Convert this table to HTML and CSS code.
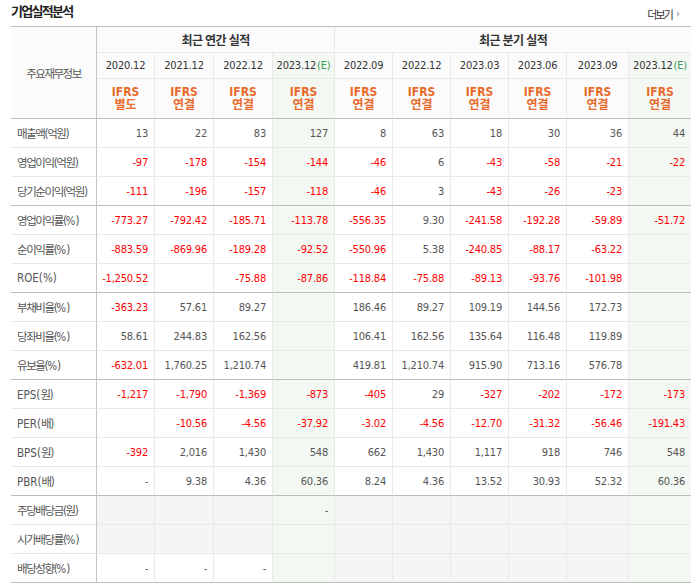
FILE: index.html
```html
<!DOCTYPE html>
<html lang="ko">
<head>
<meta charset="utf-8">
<title>기업실적분석</title>
<link rel="stylesheet" href="styles.css">
</head>
<body>
<div class="wrap">
  <div class="head">
    <h3 class="title">기업실적분석</h3>
    <a class="more" href="#">더보기<span class="arr"></span></a>
  </div>
  <table class="fin">
    <colgroup>
      <col class="c-label"><col class="c58"><col class="c59"><col class="c59"><col class="c62">
      <col class="c58"><col class="c58"><col class="c58"><col class="c58"><col class="c62"><col class="c62">
    </colgroup>
    <thead>
      <tr class="h1">
        <th class="label-h" rowspan="3">주요재무정보</th>
        <th class="grp" colspan="4">최근 연간 실적</th>
        <th class="grp last" colspan="6">최근 분기 실적</th>
      </tr>
      <tr class="h2">
        <th>2020.12</th><th>2021.12</th><th>2022.12</th><th class="e">2023.12<em>(E)</em></th>
        <th>2022.09</th><th>2022.12</th><th>2023.03</th><th>2023.06</th><th>2023.09</th><th class="e last">2023.12<em>(E)</em></th>
      </tr>
      <tr class="h3 end">
        <th>IFRS<br>별도</th><th>IFRS<br>연결</th><th>IFRS<br>연결</th><th class="e">IFRS<br>연결</th>
        <th>IFRS<br>연결</th><th>IFRS<br>연결</th><th>IFRS<br>연결</th><th>IFRS<br>연결</th><th>IFRS<br>연결</th><th class="e last">IFRS<br>연결</th>
      </tr>
    </thead>
    <tbody>
      <tr>
        <th class="lab">매출액(억원)</th>
        <td>13</td><td>22</td><td>83</td><td class="e">127</td>
        <td>8</td><td>63</td><td>18</td><td>30</td><td>36</td><td class="e last">44</td>
      </tr>
      <tr>
        <th class="lab">영업이익(억원)</th>
        <td class="n">-97</td><td class="n">-178</td><td class="n">-154</td><td class="e n">-144</td>
        <td class="n">-46</td><td>6</td><td class="n">-43</td><td class="n">-58</td><td class="n">-21</td><td class="e last n">-22</td>
      </tr>
      <tr class="end">
        <th class="lab">당기순이익(억원)</th>
        <td class="n">-111</td><td class="n">-196</td><td class="n">-157</td><td class="e n">-118</td>
        <td class="n">-46</td><td>3</td><td class="n">-43</td><td class="n">-26</td><td class="n">-23</td><td class="e last"></td>
      </tr>
      <tr>
        <th class="lab">영업이익률(<span class="lat">%</span>)</th>
        <td class="n">-773.27</td><td class="n">-792.42</td><td class="n">-185.71</td><td class="e n">-113.78</td>
        <td class="n">-556.35</td><td>9.30</td><td class="n">-241.58</td><td class="n">-192.28</td><td class="n">-59.89</td><td class="e last n">-51.72</td>
      </tr>
      <tr>
        <th class="lab">순이익률(<span class="lat">%</span>)</th>
        <td class="n">-883.59</td><td class="n">-869.96</td><td class="n">-189.28</td><td class="e n">-92.52</td>
        <td class="n">-550.96</td><td>5.38</td><td class="n">-240.85</td><td class="n">-88.17</td><td class="n">-63.22</td><td class="e last"></td>
      </tr>
      <tr class="end">
        <th class="lab"><span class="lat">ROE(%</span>)</th>
        <td class="n">-1,250.52</td><td></td><td class="n">-75.88</td><td class="e n">-87.86</td>
        <td class="n">-118.84</td><td class="n">-75.88</td><td class="n">-89.13</td><td class="n">-93.76</td><td class="n">-101.98</td><td class="e last"></td>
      </tr>
      <tr>
        <th class="lab">부채비율(<span class="lat">%</span>)</th>
        <td class="n">-363.23</td><td>57.61</td><td>89.27</td><td class="e"></td>
        <td>186.46</td><td>89.27</td><td>109.19</td><td>144.56</td><td>172.73</td><td class="e last"></td>
      </tr>
      <tr>
        <th class="lab">당좌비율(<span class="lat">%</span>)</th>
        <td>58.61</td><td>244.83</td><td>162.56</td><td class="e"></td>
        <td>106.41</td><td>162.56</td><td>135.64</td><td>116.48</td><td>119.89</td><td class="e last"></td>
      </tr>
      <tr class="end">
        <th class="lab">유보율(<span class="lat">%</span>)</th>
        <td class="n">-632.01</td><td>1,760.25</td><td>1,210.74</td><td class="e"></td>
        <td>419.81</td><td>1,210.74</td><td>915.90</td><td>713.16</td><td>576.78</td><td class="e last"></td>
      </tr>
      <tr>
        <th class="lab"><span class="lat">EPS(</span>원)</th>
        <td class="n">-1,217</td><td class="n">-1,790</td><td class="n">-1,369</td><td class="e n">-873</td>
        <td class="n">-405</td><td>29</td><td class="n">-327</td><td class="n">-202</td><td class="n">-172</td><td class="e last n">-173</td>
      </tr>
      <tr>
        <th class="lab"><span class="lat">PER(</span>배)</th>
        <td></td><td class="n">-10.56</td><td class="n">-4.56</td><td class="e n">-37.92</td>
        <td class="n">-3.02</td><td class="n">-4.56</td><td class="n">-12.70</td><td class="n">-31.32</td><td class="n">-56.46</td><td class="e last n">-191.43</td>
      </tr>
      <tr>
        <th class="lab"><span class="lat">BPS(</span>원)</th>
        <td class="n">-392</td><td>2,016</td><td>1,430</td><td class="e">548</td>
        <td>662</td><td>1,430</td><td>1,117</td><td>918</td><td>746</td><td class="e last">548</td>
      </tr>
      <tr class="end">
        <th class="lab"><span class="lat">PBR(</span>배)</th>
        <td>-</td><td>9.38</td><td>4.36</td><td class="e">60.36</td>
        <td>8.24</td><td>4.36</td><td>13.52</td><td>30.93</td><td>52.32</td><td class="e last">60.36</td>
      </tr>
      <tr>
        <th class="lab">주당배당금(원)</th>
        <td class="g"></td><td class="g"></td><td class="g"></td><td class="e">-</td>
        <td class="g"></td><td class="g"></td><td class="g"></td><td class="g"></td><td class="g"></td><td class="e last"></td>
      </tr>
      <tr>
        <th class="lab">시가배당률(<span class="lat">%</span>)</th>
        <td class="g"></td><td class="g"></td><td class="g"></td><td class="e"></td>
        <td class="g"></td><td class="g"></td><td class="g"></td><td class="g"></td><td class="g"></td><td class="e last"></td>
      </tr>
      <tr class="end">
        <th class="lab">배당성향(<span class="lat">%</span>)</th>
        <td>-</td><td>-</td><td>-</td><td class="e"></td>
        <td class="g"></td><td class="g"></td><td class="g"></td><td class="g"></td><td class="g"></td><td class="e last"></td>
      </tr>
    </tbody>
  </table>
</div>
</body>
</html>
```

FILE: styles.css
```css
* { box-sizing: border-box; }

body {
  margin: 0;
  background: #fff;
  font-family: "DejaVu Sans Condensed", "DejaVu Sans", "Noto Sans CJK KR", sans-serif;
  font-stretch: condensed;
}

.wrap {
  width: 680px;
  margin-left: 11px;
}

.head {
  height: 26px;
  display: flex;
  justify-content: space-between;
  align-items: flex-start;
}

.title {
  margin: 3px 0 0 0;
  font-family: "Noto Sans CJK KR", sans-serif;
  font-size: 13px;
  line-height: 15px;
  font-weight: bold;
  letter-spacing: -1.7px;
  color: #222;
}

.more {
  margin: 8px 11px 0 0;
  display: flex;
  align-items: center;
  font-family: "Noto Sans CJK KR", sans-serif;
  font-size: 11px;
  line-height: 12px;
  letter-spacing: -1.9px;
  color: #333;
  text-decoration: none;
}

.arr {
  margin-left: 5px;
  width: 0;
  height: 0;
  border-left: 3px solid #c4c4c4;
  border-top: 3px solid transparent;
  border-bottom: 3px solid transparent;
}

.fin {
  width: 680px;
  table-layout: fixed;
  border-collapse: separate;
  border-spacing: 0;
  border-top: 1px solid #bdbdbd;
}

.c-label { width: 86px; }
.c58 { width: 58px; }
.c59 { width: 59px; }
.c62 { width: 62px; }

.fin th,
.fin td {
  padding: 0 6px 0 0;
  border-right: 1px solid #e9e9e9;
  border-bottom: 1px solid #e9e9e9;
  font-size: 11px;
  letter-spacing: -0.2px;
  white-space: nowrap;
  vertical-align: middle;
}

.fin .last { border-right: none; }

.fin thead th {
  background: #fbfbfb;
  color: #333;
  font-weight: normal;
  text-align: center;
  padding: 0;
}

.fin thead .label-h {
  font-family: "Noto Sans CJK KR", sans-serif;
  font-size: 11.5px;
  color: #555;
  letter-spacing: -1.5px;
  border-right-color: #c6c6c6;
  border-bottom-color: #bdbdbd;
}

.fin .h1 th { height: 26px; }
.fin .h2 th { height: 26px; }
.fin .h3 th { height: 40px; }

.fin .grp {
  font-family: "Noto Sans CJK KR", sans-serif;
  font-weight: bold;
  font-size: 12px;
  letter-spacing: -0.6px;
  color: #333;
}

.fin .h2 em {
  font-style: normal;
  color: #3a9a56;
  margin-left: 1px;
}

.fin .h3 th {
  color: #ea6a2b;
  font-weight: bold;
  font-size: 12px;
  line-height: 13px;
  letter-spacing: 0;
}

.fin .end > th,
.fin .end > td {
  border-bottom-color: #bdbdbd;
}

.fin tbody th.lab {
  height: 29px;
  padding: 0 0 0 6px;
  text-align: left;
  font-family: "DejaVu Sans Condensed", "Noto Sans CJK KR", sans-serif;
  font-weight: normal;
  font-size: 11.5px;
  letter-spacing: -1.4px;
  color: #555;
  border-right-color: #c6c6c6;
  background: #fff;
}

.fin tbody th.lab .lat {
  letter-spacing: 0;
}

.fin tbody td {
  height: 29px;
  text-align: right;
  color: #555;
}

.fin td.n { color: #f00; }

.fin .e { background: #f3f8f3; }

.fin td.g { background: #f5f5f5; }
```
